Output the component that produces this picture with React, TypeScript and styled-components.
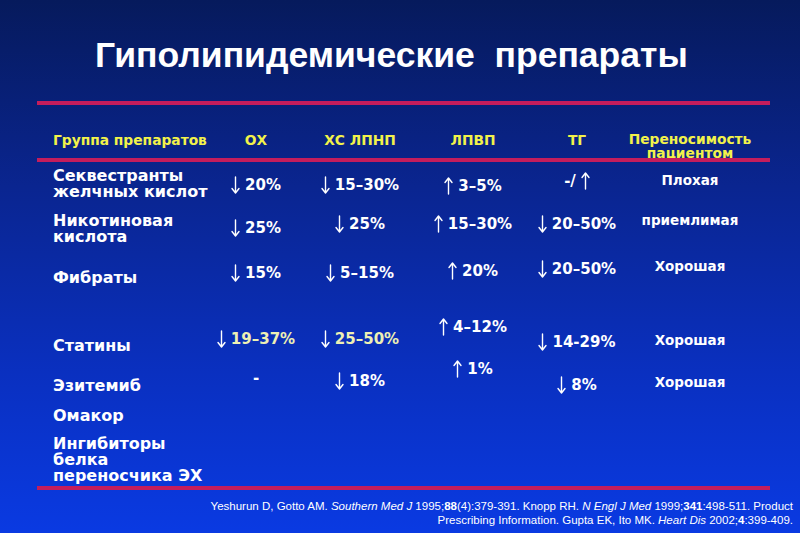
import React from 'react';
import styled, { createGlobalStyle } from 'styled-components';

const GlobalStyle = createGlobalStyle`
  html, body { margin: 0; padding: 0; width: 800px; height: 533px; overflow: hidden; }
  #root { width: 800px; height: 533px; }
`;

const Slide = styled.div`
  width: 800px;
  height: 533px;
  box-sizing: border-box;
  display: flex;
  flex-direction: column;
  background: linear-gradient(180deg, #061a5c 0%, #0a2590 35%, #0a30c0 70%, #0a3ae2 100%);
  font-family: 'DejaVu Sans', 'Noto Sans', sans-serif;
  color: #ffffff;
`;

const Title = styled.h1`
  margin: 0;
  padding: 35px 0 0 95px;
  height: 101px;
  box-sizing: border-box;
  font-family: 'Liberation Sans', Arial, sans-serif;
  font-weight: 700;
  font-size: 35.5px;
  line-height: 40px;
  white-space: pre;
  color: #ffffff;
`;

const Rule = styled.div`
  flex: none;
  height: 4px;
  margin: 0 30px 0 37px;
  background: #c41d5c;
`;

const cols = '155px 96px 112px 114px 94px 132px';

const HeadRow = styled.div`
  display: grid;
  grid-template-columns: ${cols};
  padding: 28px 0 0 53px;
  height: 53px;
  box-sizing: border-box;
  align-items: start;
`;

const HeadCell = styled.div<{ $left?: boolean; $mt?: number }>`
  margin-top: ${(p) => p.$mt ?? 0}px;
  color: #f2f24a;
  font-weight: 700;
  font-size: 13.8px;
  line-height: 14px;
  text-align: ${(p) => (p.$left ? 'left' : 'center')};
  white-space: nowrap;
`;

const Body = styled.div`
  display: flex;
  flex-direction: column;
  padding: 4px 0 0 53px;
`;

const Row = styled.div<{ $h: number }>`
  display: grid;
  grid-template-columns: ${cols};
  height: ${(p) => p.$h}px;
  align-items: start;
`;

const Label = styled.div<{ $mt: number }>`
  margin-top: ${(p) => p.$mt}px;
  font-weight: 700;
  font-size: 16px;
  line-height: 16px;
  white-space: nowrap;
`;

const Value = styled.div<{ $mt: number; $pale?: boolean }>`
  margin-top: ${(p) => p.$mt}px;
  height: 20px;
  display: flex;
  align-items: center;
  justify-content: center;
  gap: 5px;
  font-weight: 700;
  font-size: 15px;
  color: ${(p) => (p.$pale ? '#eef0b4' : '#ffffff')};
  white-space: nowrap;
`;

const Tol = styled.div<{ $mt: number }>`
  margin-top: ${(p) => p.$mt}px;
  height: 20px;
  line-height: 20px;
  text-align: center;
  font-weight: 700;
  font-size: 13.5px;
  white-space: nowrap;
`;

const Foot = styled.div`
  margin-top: 9px;
  padding-right: 7px;
  text-align: right;
  font-family: 'Liberation Sans', Arial, sans-serif;
  font-size: 11.5px;
  line-height: 14px;
  color: #ffffff;
`;

const Arrow: React.FC<{ dir: 'up' | 'down' }> = ({ dir }) => (
  <svg width="9" height="18" viewBox="0 0 9 18" style={{ transform: dir === 'up' ? 'rotate(180deg)' : undefined }}>
    <path d="M4.5 1 V16.5 M1 12.5 L4.5 17 L8 12.5" stroke="#ffffff" strokeWidth="1.4" fill="none" strokeLinecap="round" strokeLinejoin="round" />
  </svg>
);

type Cell =
  | { kind: 'v'; dir?: 'up' | 'down'; pre?: string; text?: string; mt: number; pale?: boolean }
  | { kind: 't'; text: string; mt: number };

type RowData = { h: number; label: string[]; lmt: number; cells: Cell[] };

const rows: RowData[] = [
  {
    h: 42,
    label: ['Секвестранты', 'желчных кислот'],
    lmt: 2,
    cells: [
      { kind: 'v', dir: 'down', text: '20%', mt: 9 },
      { kind: 'v', dir: 'down', text: '15–30%', mt: 9 },
      { kind: 'v', dir: 'up', text: '3–5%', mt: 10 },
      { kind: 'v', pre: '-/', dir: 'up', mt: 5 },
      { kind: 't', text: 'Плохая', mt: 4 },
    ],
  },
  {
    h: 48,
    label: ['Никотиновая', 'кислота'],
    lmt: 5,
    cells: [
      { kind: 'v', dir: 'down', text: '25%', mt: 10 },
      { kind: 'v', dir: 'down', text: '25%', mt: 6 },
      { kind: 'v', dir: 'up', text: '15–30%', mt: 6 },
      { kind: 'v', dir: 'down', text: '20–50%', mt: 6 },
      { kind: 't', text: 'приемлимая', mt: 2 },
    ],
  },
  {
    h: 60,
    label: ['Фибраты'],
    lmt: 14,
    cells: [
      { kind: 'v', dir: 'down', text: '15%', mt: 7 },
      { kind: 'v', dir: 'down', text: '5–15%', mt: 7 },
      { kind: 'v', dir: 'up', text: '20%', mt: 5 },
      { kind: 'v', dir: 'down', text: '20–50%', mt: 3 },
      { kind: 't', text: 'Хорошая', mt: 0 },
    ],
  },
  {
    h: 40,
    label: ['Статины'],
    lmt: 22,
    cells: [
      { kind: 'v', dir: 'down', text: '19–37%', mt: 13, pale: true },
      { kind: 'v', dir: 'down', text: '25–50%', mt: 13, pale: true },
      { kind: 'v', dir: 'up', text: '4–12%', mt: 1 },
      { kind: 'v', dir: 'down', text: '14-29%', mt: 16 },
      { kind: 't', text: 'Хорошая', mt: 14 },
    ],
  },
  {
    h: 44,
    label: ['Эзитемиб'],
    lmt: 22,
    cells: [
      { kind: 'v', pre: '-', mt: 12 },
      { kind: 'v', dir: 'down', text: '18%', mt: 15 },
      { kind: 'v', dir: 'up', text: '1%', mt: 3 },
      { kind: 'v', dir: 'down', text: '8%', mt: 19 },
      { kind: 't', text: 'Хорошая', mt: 16 },
    ],
  },
  { h: 30, label: ['Омакор'], lmt: 8, cells: [] },
  { h: 56, label: ['Ингибиторы', 'белка', 'переносчика ЭХ'], lmt: 6, cells: [] },
];

const headers = ['ОХ', 'ХС ЛПНП', 'ЛПВП', 'ТГ'];

export default function App() {
  return (
    <>
      <GlobalStyle />
      <Slide>
        <Title>{'Гиполипидемические  препараты'}</Title>
        <Rule />
        <HeadRow>
          <HeadCell $left>Группа препаратов</HeadCell>
          {headers.map((h) => (
            <HeadCell key={h}>{h}</HeadCell>
          ))}
          <HeadCell $mt={-1}>
            Переносимость
            <br />
            пациентом
          </HeadCell>
        </HeadRow>
        <Rule />
        <Body>
          {rows.map((r, i) => (
            <Row key={i} $h={r.h}>
              <Label $mt={r.lmt}>
                {r.label.map((l, j) => (
                  <React.Fragment key={j}>
                    {j > 0 && <br />}
                    {l}
                  </React.Fragment>
                ))}
              </Label>
              {r.cells.map((c, j) =>
                c.kind === 't' ? (
                  <Tol key={j} $mt={c.mt}>
                    {c.text}
                  </Tol>
                ) : (
                  <Value key={j} $mt={c.mt} $pale={c.pale}>
                    {c.pre && <span>{c.pre}</span>}
                    {c.dir && <Arrow dir={c.dir} />}
                    {c.text && <span>{c.text}</span>}
                  </Value>
                )
              )}
            </Row>
          ))}
        </Body>
        <Rule />
        <Foot>
          Yeshurun D, Gotto AM. <i>Southern Med J</i> 1995;<b>88</b>(4):379-391. Knopp RH. <i>N Engl J Med</i> 1999;<b>341</b>:498-511. Product
          <br />
          Prescribing Information. Gupta EK, Ito MK. <i>Heart Dis</i> 2002;<b>4</b>:399-409.
        </Foot>
      </Slide>
    </>
  );
}
